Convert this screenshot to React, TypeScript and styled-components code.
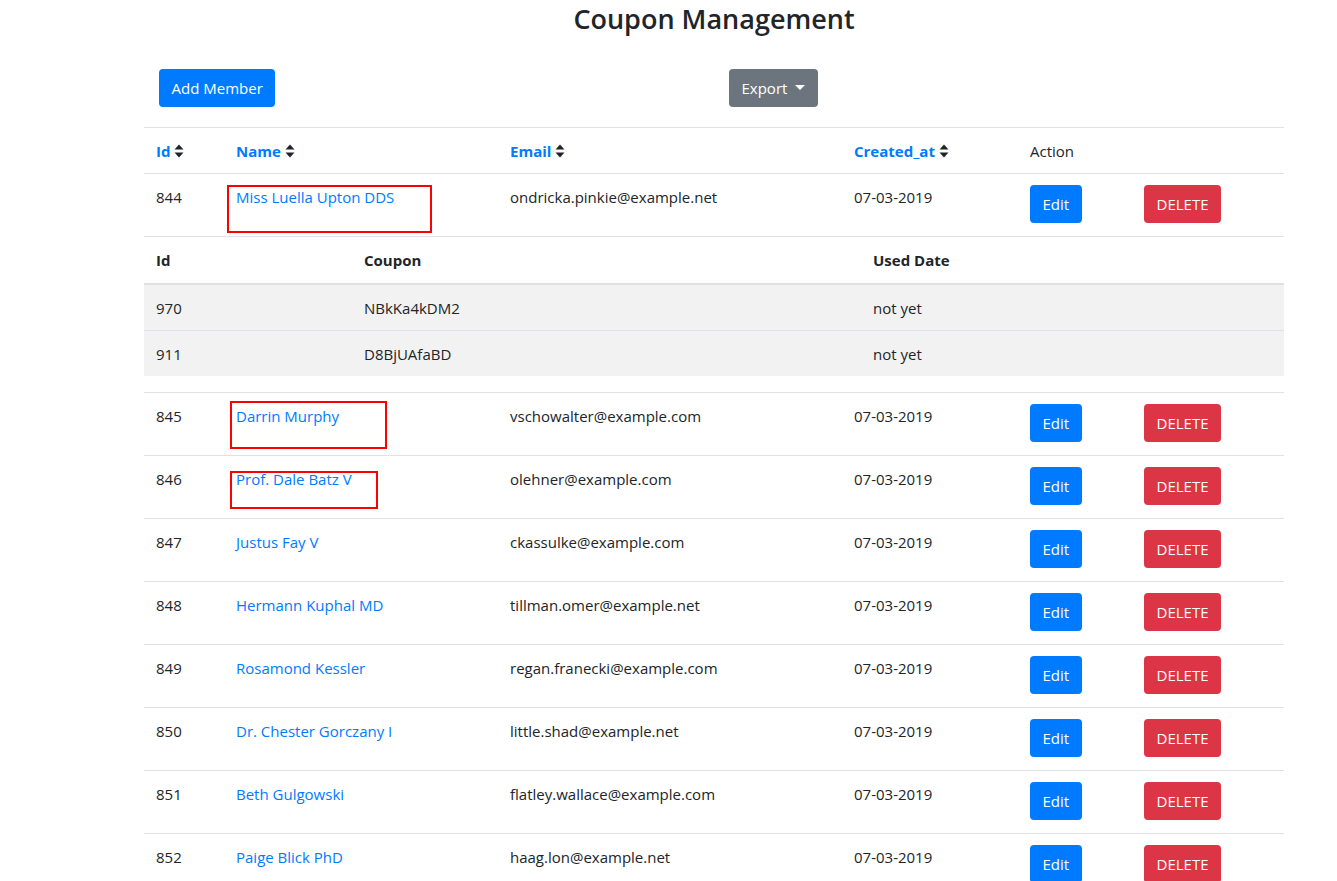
import React from "react";
import styled, { createGlobalStyle } from "styled-components";

const Global = createGlobalStyle`
  html, body { margin: 0; padding: 0; background: #fff; }
  body {
    font-family: "Open Sans", "Noto Sans", sans-serif;
    font-size: 15px;
    line-height: 24px;
    color: #212529;
  }
  * { box-sizing: border-box; }
`;

const Page = styled.div`
  width: 1170px;
  margin-left: 129px;
  padding: 0 15px;
`;

const Title = styled.h2`
  margin: 0;
  font-size: 27px;
  font-weight: 600;
  line-height: 37px;
  text-align: center;
  color: #212529;
`;

const Toolbar = styled.div`
  display: grid;
  grid-template-columns: 1fr 1fr;
  margin-top: 32px;
  margin-bottom: 20px;
`;

const Col = styled.div`
  padding: 0 15px;
`;

const Btn = styled.button<{ $variant: "primary" | "secondary" | "danger" }>`
  display: inline-flex;
  align-items: center;
  gap: 8px;
  height: 38px;
  padding: 0 12.5px;
  border: none;
  border-radius: 4px;
  font-family: inherit;
  font-size: 15px;
  color: #fff;
  cursor: pointer;
  background: ${(p) =>
    p.$variant === "primary" ? "#007bff" : p.$variant === "danger" ? "#dc3545" : "#6c757d"};
`;

const Caret = styled.span`
  width: 0;
  height: 0;
  border-left: 5px solid transparent;
  border-right: 5px solid transparent;
  border-top: 5px solid #fff;
  margin-top: -2px;
`;

const Table = styled.table`
  width: 1140px;
  border-collapse: collapse;
  table-layout: fixed;
`;

const Th = styled.th`
  text-align: left;
  padding: 11px 12px 10px;
  border-top: 1px solid #dee2e6;
  font-weight: 400;
  vertical-align: top;
`;

const SortLink = styled.a`
  color: #007bff;
  font-weight: 700;
  text-decoration: none;
  display: inline-flex;
  align-items: center;
  gap: 4px;
`;

const Td = styled.td`
  padding: 11px 12px 13px;
  border-top: 1px solid #dee2e6;
  vertical-align: top;
  position: relative;
`;

const NameLink = styled.a`
  color: #007bff;
  text-decoration: none;
`;

const NestedCell = styled.td`
  padding: 0 0 16px;
  border-top: 1px solid #dee2e6;
`;

const Inner = styled.table`
  width: 100%;
  border-collapse: separate;
  border-spacing: 0;
  table-layout: fixed;
`;

const InnerTh = styled.th`
  text-align: left;
  font-weight: 700;
  padding: 11px 12px 11px;
  border-bottom: 1px solid #dee2e6;
`;

const InnerTd = styled.td`
  padding: 11px 12px 10px;
  background: #f2f2f2;
  border-top: 1px solid #dee2e6;
`;

const Mark = styled.div<{ $l: number; $t: number; $w: number; $h: number }>`
  position: absolute;
  left: ${(p) => p.$l}px;
  top: ${(p) => p.$t}px;
  width: ${(p) => p.$w}px;
  height: ${(p) => p.$h}px;
  border: 2px solid #ff0000;
  pointer-events: none;
`;

const SortIcon = () => (
  <svg width="10" height="14" viewBox="0 0 10 14" aria-hidden>
    <path d="M5 0.5 L9.5 5.5 L0.5 5.5 Z" fill="#212529" />
    <path d="M5 13.5 L9.5 8.5 L0.5 8.5 Z" fill="#212529" />
  </svg>
);

type Member = { id: number; name: string; email: string; mark?: [number, number, number, number] };

const members: Member[] = [
  { id: 844, name: "Miss Luella Upton DDS", email: "ondricka.pinkie@example.net", mark: [3, 11, 205, 48] },
  { id: 845, name: "Darrin Murphy", email: "vschowalter@example.com", mark: [6, 8, 157, 48] },
  { id: 846, name: "Prof. Dale Batz V", email: "olehner@example.com", mark: [6, 15, 148, 38] },
  { id: 847, name: "Justus Fay V", email: "ckassulke@example.com" },
  { id: 848, name: "Hermann Kuphal MD", email: "tillman.omer@example.net" },
  { id: 849, name: "Rosamond Kessler", email: "regan.franecki@example.com" },
  { id: 850, name: "Dr. Chester Gorczany I", email: "little.shad@example.net" },
  { id: 851, name: "Beth Gulgowski", email: "flatley.wallace@example.com" },
  { id: 852, name: "Paige Blick PhD", email: "haag.lon@example.net" },
];

const coupons = [
  { id: 970, code: "NBkKa4kDM2", used: "not yet" },
  { id: 911, code: "D8BjUAfaBD", used: "not yet" },
];

const MemberRow = ({ m }: { m: Member }) => (
  <tr>
    <Td>{m.id}</Td>
    <Td>
      <NameLink href="#">{m.name}</NameLink>
      {m.mark && <Mark $l={m.mark[0]} $t={m.mark[1]} $w={m.mark[2]} $h={m.mark[3]} />}
    </Td>
    <Td>{m.email}</Td>
    <Td>07-03-2019</Td>
    <Td>
      <Btn $variant="primary">Edit</Btn>
    </Td>
    <Td>
      <Btn $variant="danger">DELETE</Btn>
    </Td>
  </tr>
);

export default function App() {
  return (
    <>
      <Global />
      <Page>
        <Title>Coupon Management</Title>
        <Toolbar>
          <Col>
            <Btn $variant="primary">Add Member</Btn>
          </Col>
          <Col>
            <Btn $variant="secondary">
              Export <Caret />
            </Btn>
          </Col>
        </Toolbar>
        <Table>
          <colgroup>
            <col style={{ width: 80 }} />
            <col style={{ width: 274 }} />
            <col style={{ width: 344 }} />
            <col style={{ width: 176 }} />
            <col style={{ width: 114 }} />
            <col style={{ width: 152 }} />
          </colgroup>
          <thead>
            <tr>
              <Th><SortLink href="#">Id <SortIcon /></SortLink></Th>
              <Th><SortLink href="#">Name <SortIcon /></SortLink></Th>
              <Th><SortLink href="#">Email <SortIcon /></SortLink></Th>
              <Th><SortLink href="#">Created_at <SortIcon /></SortLink></Th>
              <Th>Action</Th>
              <Th></Th>
            </tr>
          </thead>
          <tbody>
            <MemberRow m={members[0]} />
            <tr>
              <NestedCell colSpan={6}>
                <Inner>
                  <colgroup>
                    <col style={{ width: 208 }} />
                    <col style={{ width: 509 }} />
                    <col style={{ width: 423 }} />
                  </colgroup>
                  <thead>
                    <tr>
                      <InnerTh>Id</InnerTh>
                      <InnerTh>Coupon</InnerTh>
                      <InnerTh>Used Date</InnerTh>
                    </tr>
                  </thead>
                  <tbody>
                    {coupons.map((c) => (
                      <tr key={c.id}>
                        <InnerTd>{c.id}</InnerTd>
                        <InnerTd>{c.code}</InnerTd>
                        <InnerTd>{c.used}</InnerTd>
                      </tr>
                    ))}
                  </tbody>
                </Inner>
              </NestedCell>
            </tr>
            {members.slice(1).map((m) => (
              <MemberRow key={m.id} m={m} />
            ))}
          </tbody>
        </Table>
      </Page>
    </>
  );
}
